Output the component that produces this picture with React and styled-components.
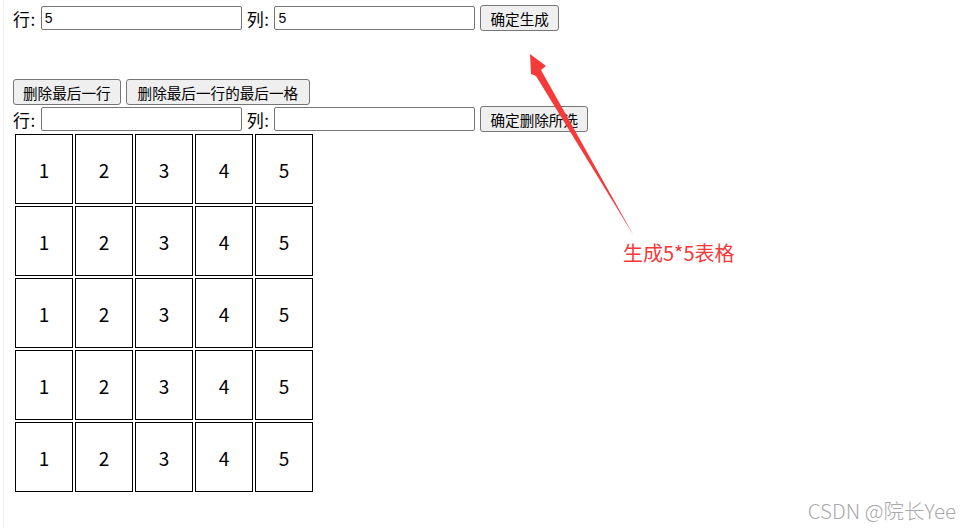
import React from "react";
import styled, { createGlobalStyle } from "styled-components";

const Global = createGlobalStyle`
  html, body {
    margin: 0;
    padding: 0;
    background: #fff;
    height: 528px;
    overflow: hidden;
  }
  body {
    font-family: "Noto Sans CJK SC", "Liberation Sans", sans-serif;
  }
`;

const Page = styled.div`
  position: relative;
  width: 964px;
  height: 528px;
  box-sizing: border-box;
  padding: 5px 0 0 9px;
  border-left: 1px solid #f1f1f1;
  margin-left: 3px;
`;

const Row = styled.div`
  display: flex;
  align-items: center;
  gap: 5px;
  height: 26px;
  margin-top: ${(p) => p.mt || 0}px;
`;

const Label = styled.span`
  font-size: 17px;
  color: #000;
  line-height: 1;
  letter-spacing: 0.5px;
`;

const Input = styled.input`
  width: 201px;
  height: 24px;
  box-sizing: border-box;
  border: 1px solid #767676;
  border-radius: 2px;
  padding: 1px 3px;
  font-family: "Liberation Sans", sans-serif;
  font-size: 14px;
  color: #000;
`;

const Button = styled.button`
  height: 26px;
  box-sizing: border-box;
  background: #efefef;
  border: 1px solid #767676;
  border-radius: 3px;
  padding: 0 ${(p) => p.px || 9}px;
  font-family: "Noto Sans CJK SC", sans-serif;
  font-size: 14.6px;
  color: #000;
`;

const Grid = styled.table`
  border-collapse: separate;
  border-spacing: 2px;
`;

const Cell = styled.td`
  width: 56px;
  height: 68px;
  border: 1px solid #000;
  padding: 0;
  text-align: center;
  font-family: "Noto Sans CJK SC", sans-serif;
  font-size: 19px;
  color: #000;
`;

const Arrow = styled.svg`
  position: absolute;
  left: -4px;
  top: 0;
  pointer-events: none;
`;

const Note = styled.div`
  position: absolute;
  left: 619px;
  top: 238px;
  font-size: 20px;
  color: #f5393b;
  font-family: "Noto Sans CJK SC", sans-serif;
`;

const Mark = styled.div`
  position: absolute;
  right: 11px;
  top: 495px;
  font-size: 20.5px;
  font-weight: 300;
  color: #a9a9a9;
  font-family: "Noto Sans CJK SC", sans-serif;
`;

export default function App() {
  const rows = [0, 1, 2, 3, 4];
  const cols = [1, 2, 3, 4, 5];
  return (
    <Page>
      <Global />
      <Row>
        <Label>行:</Label>
        <Input defaultValue="5" />
        <Label>列:</Label>
        <Input defaultValue="5" />
        <Button>确定生成</Button>
      </Row>
      <Row mt={48}>
        <Button>删除最后一行</Button>
        <Button px={11}>删除最后一行的最后一格</Button>
      </Row>
      <Row mt={1}>
        <Label>行:</Label>
        <Input />
        <Label>列:</Label>
        <Input />
        <Button>确定删除所选</Button>
      </Row>
      <Grid>
        <tbody>
          {rows.map((r) => (
            <tr key={r}>
              {cols.map((c) => (
                <Cell key={c}>{c}</Cell>
              ))}
            </tr>
          ))}
        </tbody>
      </Grid>
      <Arrow width="967" height="528">
        <polygon
          points="530,54 546,66 541,70 634,236 536,76 531,74"
          fill="#f53a3a"
        />
      </Arrow>
      <Note>生成5*5表格</Note>
      <Mark>CSDN @院长Yee</Mark>
    </Page>
  );
}
